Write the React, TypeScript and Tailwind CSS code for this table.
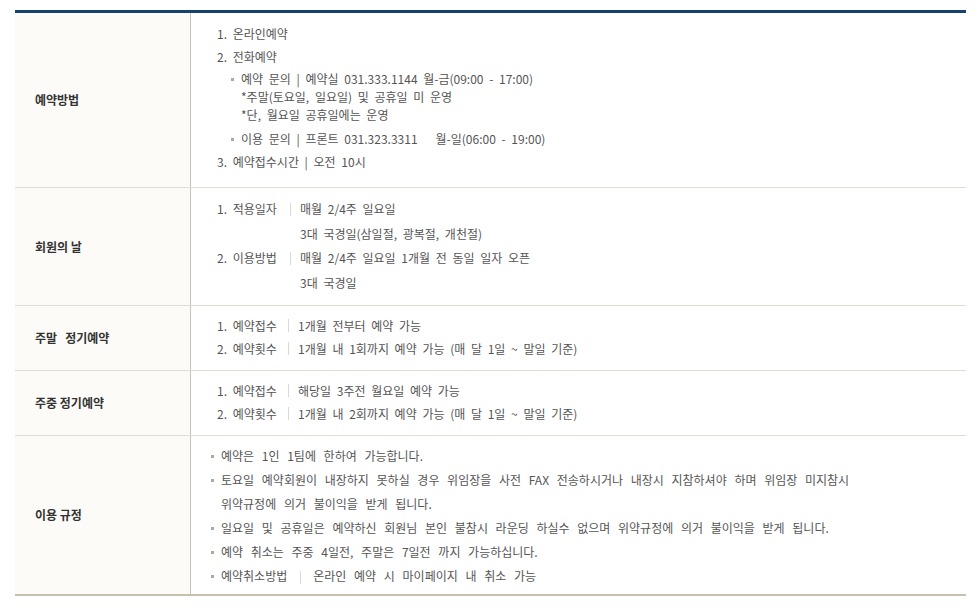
import React from "react";

const font = { fontFamily: '"Noto Sans CJK KR", "Noto Sans", sans-serif' };

function Sep({ cls = "mx-[9px]" }: { cls?: string }) {
  return <span className={`inline-block self-center w-px h-[13px] bg-[#d9d9d9] align-middle ${cls}`} />;
}

function Dot() {
  return <span className="inline-block w-[3px] h-[3px] bg-[#aaa] align-middle mr-[7px] relative -top-px" />;
}

function Row({ label, children, cls }: { label: string; children: React.ReactNode; cls: string }) {
  return (
    <div className={`flex ${cls}`}>
      <div className="w-[176px] shrink-0 bg-[#fcfbf8] border-r border-[#c9c1b4] flex items-center pl-[20px] text-[12px] font-bold text-[#333] whitespace-pre">
        {label}
      </div>
      <div className="flex-1 text-[12px] text-[#555] [word-spacing:3px]">{children}</div>
    </div>
  );
}

export default function App() {
  return (
    <div className="w-[979px] h-[614px] bg-white" style={font}>
      <div className="pt-[10px] pl-[15px] w-[966px]">
        <div className="border-t-[3px] border-[#17416f]">
          {/* 예약방법 */}
          <Row label="예약방법" cls="border-b border-[#e1ddd6]">
            <div className="pl-[26px] pt-[9px] pb-[14px] leading-[23px]">
              <div>1. 온라인예약</div>
              <div>2. 전화예약</div>
              <div className="pl-[14px]">
                <div className="leading-[18px] pt-[2px]">
                  <div><Dot />예약 문의 | 예약실 031.333.1144 월-금(09:00 - 17:00)</div>
                  <div className="pl-[10px]">*주말(토요일, 일요일) 및 공휴일 미 운영</div>
                  <div className="pl-[10px]">*단, 월요일 공휴일에는 운영</div>
                </div>
                <div className="pt-[3px]">
                  <Dot />이용 문의 | 프론트 031.323.3311<span className="ml-[18px]">월-일(06:00 - 19:00)</span>
                </div>
              </div>
              <div>3. 예약접수시간 | 오전 10시</div>
            </div>
          </Row>

          {/* 회원의 날 */}
          <Row label="회원의 날" cls="border-b border-[#e1ddd6]">
            <div className="pl-[26px] pt-[9px] pb-[10px] leading-[24px]">
              <div className="flex"><span className="w-[64px]">1. 적용일자</span><Sep /><span>매월 2/4주 일요일</span></div>
              <div className="pl-[83px] pt-[1px]">3대 국경일(삼일절, 광복절, 개천절)</div>
              <div className="flex"><span className="w-[64px]">2. 이용방법</span><Sep /><span>매월 2/4주 일요일 1개월 전 동일 일자 오픈</span></div>
              <div className="pl-[83px] pt-[1px]">3대 국경일</div>
            </div>
          </Row>

          {/* 주말 정기예약 */}
          <Row label="주말   정기예약" cls="border-b border-[#e1ddd6]">
            <div className="pl-[26px] pt-[8px] pb-[10px] leading-[23px]">
              <div className="flex"><span className="w-[62px]">1. 예약접수</span><Sep /><span>1개월 전부터 예약 가능</span></div>
              <div className="flex"><span className="w-[62px]">2. 예약횟수</span><Sep /><span>1개월 내 1회까지 예약 가능 (매 달 1일 ~ 말일 기준)</span></div>
            </div>
          </Row>

          {/* 주중 정기예약 */}
          <Row label="주중 정기예약" cls="border-b border-[#e1ddd6]">
            <div className="pl-[26px] pt-[8px] pb-[10px] leading-[23px]">
              <div className="flex"><span className="w-[62px]">1. 예약접수</span><Sep /><span>해당일 3주전 월요일 예약 가능</span></div>
              <div className="flex"><span className="w-[62px]">2. 예약횟수</span><Sep /><span>1개월 내 2회까지 예약 가능 (매 달 1일 ~ 말일 기준)</span></div>
            </div>
          </Row>

          {/* 이용 규정 */}
          <Row label="이용 규정" cls="border-b-2 border-[#c8bfb1]">
            <div className="pl-[20px] pt-[8px] pb-[6px] leading-[24px] [word-spacing:5px]">
              <div><Dot />예약은 1인 1팀에 한하여 가능합니다.</div>
              <div><Dot />토요일 예약회원이 내장하지 못하실 경우 위임장을 사전 FAX 전송하시거나 내장시 지참하셔야 하며 위임장 미지참시</div>
              <div className="pl-[10px]">위약규정에 의거 불이익을 받게 됩니다.</div>
              <div><Dot />일요일 및 공휴일은 예약하신 회원님 본인 불참시 라운딩 하실수 없으며 위약규정에 의거 불이익을 받게 됩니다.</div>
              <div><Dot />예약 취소는 주중 4일전, 주말은 7일전 까지 가능하십니다.</div>
              <div><Dot />예약취소방법<Sep cls="ml-[13px] mr-[12px]" /><span>온라인 예약 시 마이페이지 내 취소 가능</span></div>
            </div>
          </Row>
        </div>
      </div>
    </div>
  );
}
